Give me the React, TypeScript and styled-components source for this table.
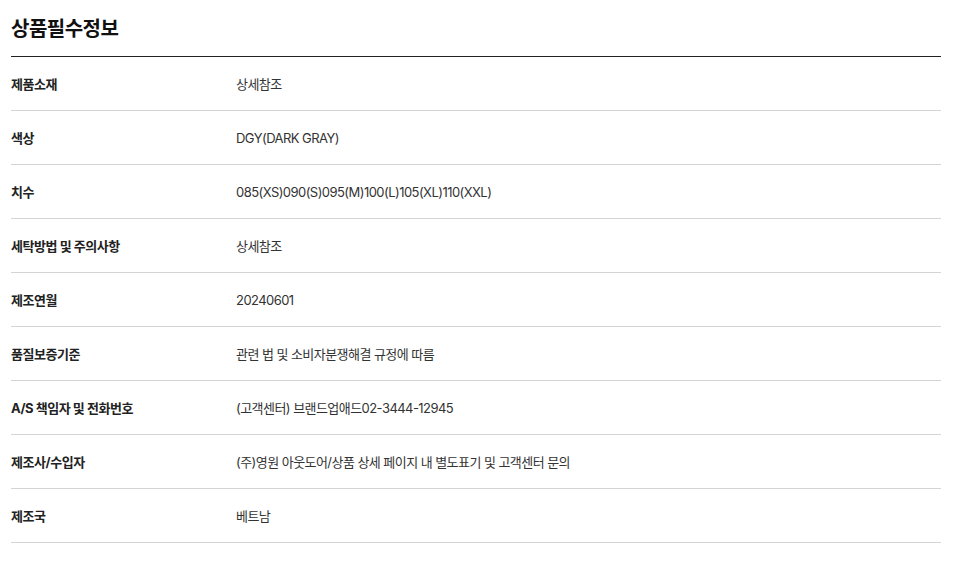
import React from "react";
import styled, { createGlobalStyle } from "styled-components";

const Global = createGlobalStyle`
  html, body { margin: 0; padding: 0; background: #fff; }
  body { font-family: Inter, "Noto Sans CJK KR", "Noto Sans", sans-serif; color: #222; }
`;

const Wrap = styled.section`
  width: 930px;
  margin-left: 11px;
`;

const Title = styled.h2`
  margin: 0;
  height: 57px;
  display: flex;
  align-items: center;
  padding-bottom: 2px;
  box-sizing: border-box;
  font-size: 20px;
  font-weight: 700;
  letter-spacing: -0.5px;
  color: #111;
  border-bottom: 1px solid #222;
`;

const Table = styled.dl`
  margin: 0;
`;

const Row = styled.div`
  display: grid;
  grid-template-columns: 225px 1fr;
  align-items: center;
  height: 54px;
  box-sizing: border-box;
  border-bottom: 1px solid #d4d4d4;
`;

const Label = styled.dt`
  font-size: 13px;
  font-weight: 700;
  color: #222;
  letter-spacing: -0.45px;
`;

const Value = styled.dd`
  margin: 0;
  font-size: 13px;
  color: #333;
  letter-spacing: -0.55px;
`;

const rows: [string, string][] = [
  ["제품소재", "상세참조"],
  ["색상", "DGY(DARK GRAY)"],
  ["치수", "085(XS)090(S)095(M)100(L)105(XL)110(XXL)"],
  ["세탁방법 및 주의사항", "상세참조"],
  ["제조연월", "20240601"],
  ["품질보증기준", "관련 법 및 소비자분쟁해결 규정에 따름"],
  ["A/S 책임자 및 전화번호", "(고객센터) 브랜드업애드02-3444-12945"],
  ["제조사/수입자", "(주)영원 아웃도어/상품 상세 페이지 내 별도표기 및 고객센터 문의"],
  ["제조국", "베트남"],
];

export default function App() {
  return (
    <Wrap>
      <Global />
      <Title>상품필수정보</Title>
      <Table>
        {rows.map(([k, v]) => (
          <Row key={k}>
            <Label>{k}</Label>
            <Value>{v}</Value>
          </Row>
        ))}
      </Table>
    </Wrap>
  );
}
